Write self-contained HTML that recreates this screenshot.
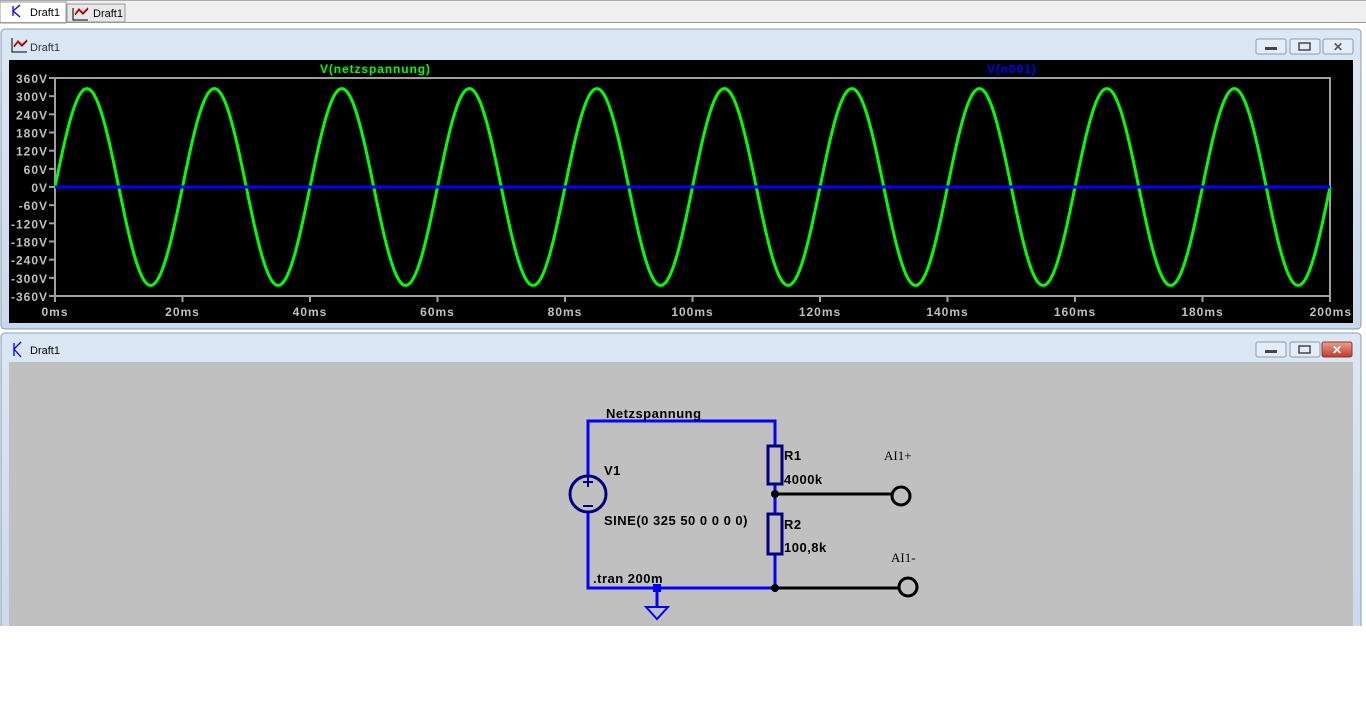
<!DOCTYPE html>
<html><head><meta charset="utf-8"><style>
body{margin:0;width:1366px;height:728px;background:#fff;overflow:hidden;font-family:"Liberation Sans",sans-serif}
svg{display:block}
</style></head><body>
<svg width="1366" height="728" xmlns="http://www.w3.org/2000/svg" font-family="Liberation Sans, sans-serif">
<rect x="0" y="0" width="1366" height="23" fill="#f0f0f0"/>
<line x1="0" y1="0.5" x2="1366" y2="0.5" stroke="#aaa"/>
<rect x="0" y="2" width="66" height="21" fill="#fff" stroke="#999"/>
<rect x="67" y="4" width="58" height="18" fill="#e8e8e8" stroke="#999"/>
<line x1="0" y1="22.5" x2="1366" y2="22.5" stroke="#999"/>
<path d="M13 6 V16 M13 11 L20 5 M13 11 L20 17" stroke="#00f" stroke-width="1.3" fill="none"/>
<text x="30" y="16" font-size="11" fill="#000">Draft1</text>
<path d="M73 8 V20 H88 M75 15 L79 10 L83 14 L88 9" stroke="#000" stroke-width="1" fill="none"/>
<path d="M75 14 L79 9 L83 13 L88 8" stroke="#e00" stroke-width="1.3" fill="none"/>
<text x="93" y="17" font-size="11" fill="#000">Draft1</text>

<defs><linearGradient id="tb" x1="0" y1="0" x2="0" y2="1"><stop offset="0" stop-color="#dce7f4"/><stop offset="1" stop-color="#c9d9ec"/></linearGradient>
<linearGradient id="rb" x1="0" y1="0" x2="0" y2="1"><stop offset="0" stop-color="#e8a090"/><stop offset="1" stop-color="#c0392b"/></linearGradient></defs>
<rect x="1" y="29" width="1360" height="300" rx="4" fill="url(#tb)" stroke="#8a9bb0"/>
<path d="M12 38 V52 H27 M14 47 L18 42 L22 46 L27 41" stroke="#000" stroke-width="1" fill="none"/>
<path d="M14 46 L18 41 L22 45 L27 40" stroke="#e00" stroke-width="1.3" fill="none"/>
<text x="30" y="51" font-size="11" fill="#333">Draft1</text>
<g stroke="#8a9bb0" fill="#e4ecf5"><rect x="1256" y="39" width="30" height="15" rx="2"/><rect x="1290" y="39" width="30" height="15" rx="2"/><rect x="1323" y="39" width="30" height="15" rx="2"/></g>
<rect x="1265" y="47" width="12" height="3" fill="#445"/>
<rect x="1299" y="43" width="11" height="7" fill="none" stroke="#445" stroke-width="1.5"/>
<text x="1338" y="51" font-size="12" font-weight="bold" fill="#556" text-anchor="middle">✕</text>
<rect x="9" y="60" width="1344" height="263" fill="#000"/>
<text x="320" y="73" font-size="12" font-weight="bold" fill="#00ff00" letter-spacing="0.9">V(netzspannung)</text>
<text x="987" y="73" font-size="12" font-weight="bold" fill="#0000ff" letter-spacing="0.9">V(n001)</text>
<g id="axes"></g>
<polyline id="sine" fill="none" stroke="#00ff00" stroke-width="3" points=""/>
<line x1="55" y1="187" x2="1330" y2="187" stroke="#0000ff" stroke-width="3"/>

<rect x="1" y="333" width="1360" height="300" rx="4" fill="url(#tb)" stroke="#8a9bb0"/>
<path d="M14 343 V356 M14 349 L21 342 M14 349 L21 357" stroke="#00f" stroke-width="1.3" fill="none"/>
<text x="30" y="354" font-size="11" fill="#000">Draft1</text>
<g stroke="#8a9bb0" fill="#e4ecf5"><rect x="1256" y="342" width="30" height="15" rx="2"/><rect x="1290" y="342" width="30" height="15" rx="2"/></g>
<rect x="1322" y="342" width="30" height="15" rx="2" fill="url(#rb)" stroke="#8a3a30"/>
<rect x="1265" y="350" width="12" height="3" fill="#445"/>
<rect x="1299" y="346" width="11" height="7" fill="none" stroke="#445" stroke-width="1.5"/>
<text x="1337" y="354" font-size="12" font-weight="bold" fill="#fff" text-anchor="middle">✕</text>
<rect x="9" y="362" width="1344" height="264" fill="#c0c0c0"/>
<rect x="0" y="626" width="1366" height="102" fill="#fff"/>

<g stroke="#0000ff" stroke-width="3" fill="none">
<path d="M588 476 V421 H775 V446 M775 484 V514 M775 554 V588 H588 V512"/>
<path d="M657 588 V607"/>
<path d="M646 607 H668 L657 619 Z" stroke-width="2"/>
</g>
<rect x="653" y="584" width="8" height="8" fill="#0000ff"/>
<g stroke="#000080" stroke-width="3" fill="none">
<rect x="768" y="446" width="14" height="38"/>
<rect x="768" y="514" width="14" height="40"/>
<circle cx="588" cy="494" r="18"/>
<path d="M583 482 H593 M588 477 V487 M583 506 H593" stroke-width="2"/>
</g>
<g stroke="#000" stroke-width="3" fill="none">
<path d="M775 494 H892 M775 588 H899"/>
<circle cx="901" cy="496" r="9"/>
<circle cx="908" cy="587" r="9"/>
</g>
<circle cx="775" cy="494" r="4" fill="#000"/>
<circle cx="775" cy="588" r="4" fill="#000"/>
<g font-size="13" font-weight="bold" fill="#000" letter-spacing="0.5">
<text x="606" y="418">Netzspannung</text>
<text x="604" y="475">V1</text>
<text x="604" y="525">SINE(0 325 50 0 0 0 0)</text>
<text x="593" y="583">.tran 200m</text>
<text x="784" y="460">R1</text>
<text x="784" y="484">4000k</text>
<text x="784" y="529">R2</text>
<text x="784" y="552">100,8k</text>
</g>
<g font-family="Liberation Serif, serif" font-size="13" fill="#000">
<text x="884" y="460">AI1+</text>
<text x="891" y="562">AI1-</text>
</g>
</svg>
<script>
var ns="http://www.w3.org/2000/svg";
var pts=[];for(var x=55;x<=1330;x+=1){var t=(x-55)/1275*0.2;pts.push(x+","+(187-98.4*Math.sin(2*Math.PI*50*t)).toFixed(1));}
document.getElementById("sine").setAttribute("points",pts.join(" "));
var g=document.getElementById("axes");
function el(n,a,txt){var e=document.createElementNS(ns,n);for(var k in a)e.setAttribute(k,a[k]);if(txt)e.textContent=txt;g.appendChild(e);}
el("rect",{x:55,y:78,width:1275,height:218,fill:"none",stroke:"#a0a0a0","stroke-width":2});
for(var i=0;i<=12;i++){var v=360-60*i,y=78+i*218/12;el("line",{x1:49,y1:y,x2:55,y2:y,stroke:"#a0a0a0","stroke-width":2});
el("text",{x:48,y:y+5,"font-size":12,"font-weight":"bold",fill:"#c0c0c0","text-anchor":"end","letter-spacing":"1"},v+"V");}
for(var j=0;j<=10;j++){var x=55+j*127.5;el("line",{x1:x,y1:296,x2:x,y2:302,stroke:"#a0a0a0","stroke-width":2});
el("text",{x:j==10?1352:x,y:316,"font-size":12,"font-weight":"bold",fill:"#c0c0c0","text-anchor":j==10?"end":"middle","letter-spacing":"1"},(j*20)+"ms");}
</script>
</body></html>
